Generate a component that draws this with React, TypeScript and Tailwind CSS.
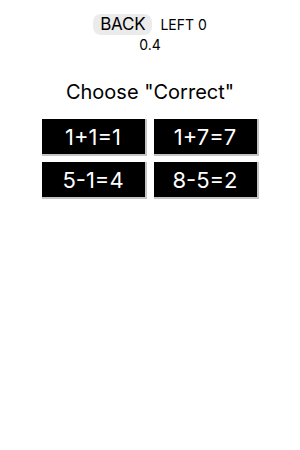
import React from 'react';

const answers = ['1+1=1', '1+7=7', '5-1=4', '8-5=2'];

export default function App() {
  return (
    <div className="w-[300px] h-[450px] bg-white flex flex-col items-center pt-[14px] text-black font-['Inter',sans-serif]">
      <div className="flex items-center gap-[8px]">
        <button className="h-[21px] px-[7px] rounded-[8px] bg-[#ebebeb] text-[17px] leading-none tracking-[-0.2px]">
          BACK
        </button>
        <span className="text-[14px] leading-none">LEFT 0</span>
      </div>
      <div className="text-[14px] leading-[17px] mt-[1px]">0.4</div>

      <div className="mt-[26px] text-[20px] leading-[26px]">Choose "Correct"</div>

      <div className="grid grid-cols-2 gap-x-[7px] gap-y-[6px] mt-[14px]">
        {answers.map(a => (
          <button
            key={a}
            className="w-[105px] h-[37px] bg-black text-white text-[22px] leading-none border-r-[2px] border-b-[2px] border-[#c4c4c4] flex items-center justify-center"
          >
            {a}
          </button>
        ))}
      </div>
    </div>
  );
}
